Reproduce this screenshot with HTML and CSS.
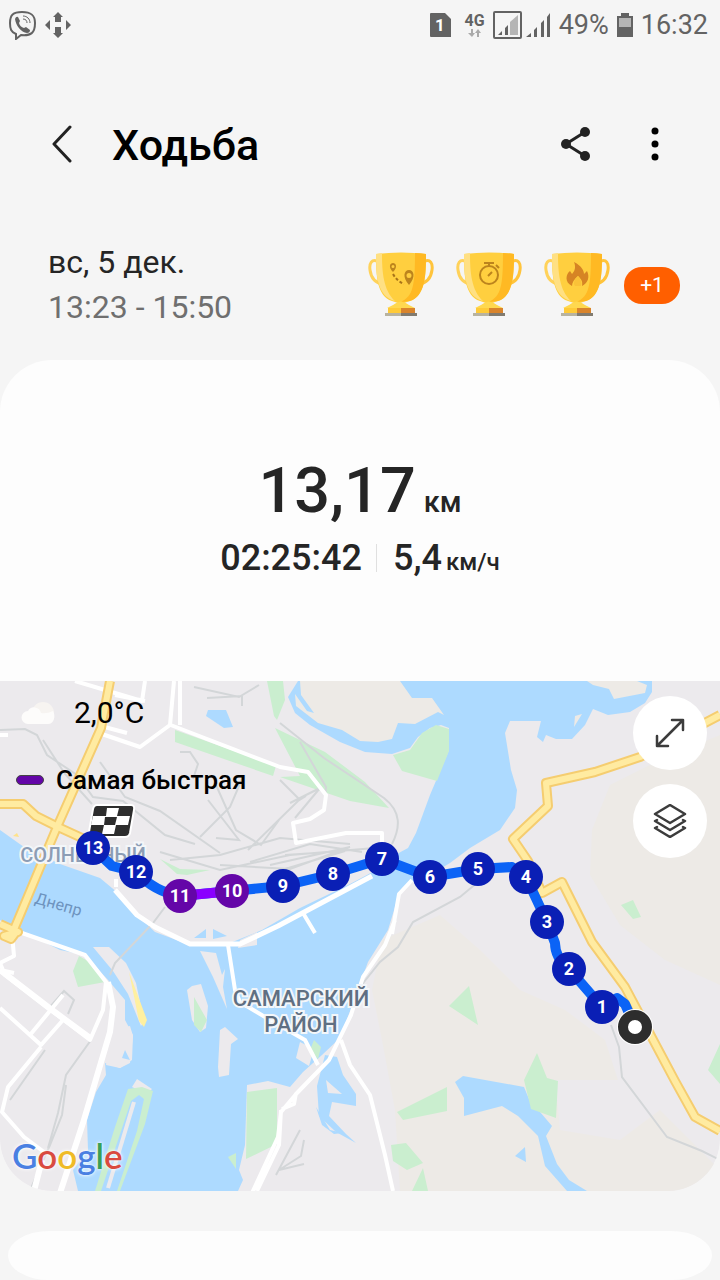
FILE: index.html
```html
<!DOCTYPE html>
<html lang="ru">

<head>
    <meta charset="utf-8">
    <meta name="viewport" content="width=device-width, initial-scale=1">
    <title>Ходьба</title>
    <link rel="stylesheet" href="styles.css">
</head>

<body>
    <div class="status-bar">
        <div class="status-left">
            <svg width="28" height="30" viewBox="0 0 28 30" fill="none" stroke="#636363">
                <path d="M14 2C5 2 2 5 2 13c0 6 1 9 6 11v5l5-4c10 1 14-2 14-12C27 5 23 2 14 2z" stroke-width="2" />
                <path d="M7 9q1-3 3-2l2 4-1 2q1 4 5 5l2-1 4 3q0 3-3 3C13 22 8 16 7 9z" fill="#636363" stroke="none" />
                <path d="M15 6c4 0 7 3 7 7M15 9c3 0 4 2 4 4" />
            </svg>
            <svg width="28" height="28" viewBox="0 0 28 28" fill="#636363">
                <path d="M14 1l5 5h-2v5h-6V6H9zM14 27l-5-5h2v-6h6v6h2zM1 14l5-5v10zM27 14l-5-5v10z" />
            </svg>
        </div>
        <div class="status-right">
            <svg width="21" height="24" viewBox="0 0 21 24">
                <path d="M1 0h14l6 6v18H1q-1 0-1-1V1q0-1 1-1z" fill="#636363" />
                <text x="10" y="18" class="sim-number">1</text>
            </svg>
            <div class="network">
                <span>4G</span>
                <svg width="14" height="8" viewBox="0 0 14 8" fill="#aaa">
                    <path d="M3 0h2v4h2L4 8 0 4h3zM9 8h2V4h2l-3-4-3 4h2z" />
                </svg>
            </div>
            <svg width="29" height="28" viewBox="0 0 29 28">
                <rect x="1" y="1" width="27" height="26" rx="1" fill="none" stroke="#636363" stroke-width="2" />
                <path d="M17 11l8-7v20h-8z" fill="#b5b5b5" />
                <path d="M5 24l4-4v4zM12 17l3-3v10h-3z" fill="#636363" />
            </svg>
            <svg class="signal" width="25" height="25" viewBox="0 0 25 25" fill="#636363">
                <path d="M0 24l5-4v4zM8 17l3-3v10H8zM15 10l3-3v17h-3zM21 4l3-4v24h-3z" />
            </svg>
            <span class="percent">49%</span>
            <svg class="battery" width="16" height="24" viewBox="0 0 16 24">
                <path d="M4 0h8v3h4v21H0V3h4z" fill="#636363" />
                <path d="M2 5h12v9H2z" fill="#b5b5b5" />
            </svg>
            <span>16:32</span>
        </div>
    </div>

    <header class="app-bar">
        <button type="button" class="icon-btn" aria-label="Назад">
            <svg width="22" height="38" viewBox="0 0 22 38" fill="none" stroke="#222" stroke-width="3" stroke-linecap="round" stroke-linejoin="round">
                <path d="M19 2L3 19l16 17" />
            </svg>
        </button>
        <h1>Ходьба</h1>
        <button type="button" class="icon-btn" aria-label="Поделиться">
            <svg width="32" height="34" viewBox="0 0 32 34" fill="#222">
                <path d="M26 5L7 17l19 12" fill="none" stroke="#222" stroke-width="3" />
                <circle cx="26" cy="5" r="5" />
                <circle cx="7" cy="17" r="5" />
                <circle cx="26" cy="29" r="5" />
            </svg>
        </button>
        <button type="button" class="icon-btn" aria-label="Ещё">
            <svg width="10" height="34" viewBox="0 0 10 34" fill="#000">
                <circle cx="5" cy="4" r="3.5" />
                <circle cx="5" cy="17" r="3.5" />
                <circle cx="5" cy="30" r="3.5" />
            </svg>
        </button>
    </header>

    <section class="summary">
        <div class="dates">
            <div>вс, 5 дек.</div>
            <div class="time-range">13:23 - 15:50</div>
        </div>
        <div class="awards">
            <svg width="0" height="0" class="defs">
                <defs>
                    <g id="cup">
                        <path d="M9 9C4 7 1 11 2 18c1 8 6 13 13 14" fill="none" stroke="#ffd25a" stroke-width="3" />
                        <path d="M57 9c5-2 8 2 7 9-1 8-6 13-13 14" fill="none" stroke="#ffc43c" stroke-width="3" />
                        <path d="M8 2q25-3 50 0c0 22-1 42-16 47l-6 2 1 2 9 6v1H20v-1l9-6 1-2-6-2C9 44 8 24 8 2z" fill="#ffcf3f" />
                        <path d="M8 2l6-1c0 18 1 37 13 48C9 44 8 24 8 2z" fill="#ffe083" />
                        <path d="M47 1q6 0 11 1c0 22-1 42-16 47l-9 1c12-6 14-16 14-49z" fill="#ffb923" />
                        <path d="M25 53q8-7 16 0l6 3H19z" fill="#ffd84f" />
                        <path d="M20 56h26v5H20z" fill="#ffca37" />
                        <path d="M33 56h14v5H33z" fill="#d9842c" />
                        <path d="M17 61h32v3H17z" fill="#b8b3a0" />
                        <path d="M33 61h16v3H33z" fill="#817b70" />
                    </g>
                </defs>
            </svg>
            <svg width="66" height="66" viewBox="0 0 66 66">
                <use href="#cup" />
                <path fill-rule="evenodd" fill="#bc841d" d="M25 20c-5-5-3-9 0-9s5 4 0 9zM25 13a1 1 0 0 0 0 3 1 1 0 0 0 0-3zM41 33c-7-8-5-15 0-15s7 7 0 15zM41 21a2 2 0 0 0 0 5 2 2 0 0 0 0-5z" />
                <path d="M25 22q4 7 11 10" fill="none" stroke="#a87419" stroke-width="2" stroke-dasharray="3 2" />
            </svg>
            <svg width="66" height="66" viewBox="0 0 66 66">
                <use href="#cup" />
                <g fill="none" stroke="#bc841d" stroke-width="2">
                    <circle cx="33" cy="23" r="9" />
                    <path d="M28 11h10M33 11v3M32 24l4-4M40 13l3 3" />
                </g>
            </svg>
            <svg width="66" height="66" viewBox="0 0 66 66">
                <use href="#cup" />
                <path fill="#d68424" d="M28 34c-8-4-6-12-2-15l2 3c3-3 4-7 2-12 8 4 10 9 10 12l3-3c3 6 1 12-5 15 1-5-1-7-4-10-4 3-6 7-6 10z" />
                <path fill="#fac238" d="M34 24c-4 3-5 8-3 10h6c1-3 0-7-3-10z" />
            </svg>
            <span class="more">+1</span>
        </div>
    </section>

    <main class="card">
        <div class="stats">
            <div class="distance">13,17<small>км</small></div>
            <div class="details">
                <span class="duration">02:25:42</span>
                <span class="speed">5,4<small>км/ч</small></span>
            </div>
        </div>

        <div class="map">
            <svg class="map-canvas" viewBox="0 681 720 510">
                <rect y="681" width="720" height="510" fill="#eceaed" />

                <!-- open country -->
                <g fill="#edeae6">
                    <path d="M720 735L660 760 610 785 592 830 590 875 620 925 665 960 720 985z" />
                    <path d="M382 940L440 915 480 950 520 990 565 1010 605 1040 618 1080 555 1080 560 1130 620 1140 660 1110 720 1170 720 1191 400 1191 395 1110 382 1040 372 990z" />
                </g>

                <!-- water -->
                <g fill="#addaff">
                    <path d="M0 830L24 847 60 864 100 878 118 893 135 913 155 932 190 945 230 943 262 930 300 908 350 884 380 868 395 855 408 848 416 833 430 795 449 750 449 728 441 725 430 728 418 737 410 748 392 754 365 752 340 742 310 725 295 713 288 697 298 681H652L652 692 645 703 630 712 608 715 593 709 585 725 572 739 556 739 546 735 543 742 537 737 541 721H510L505 733 511 770 517 790 515 808 500 830 470 848 450 863 430 875 408 884 398 897 388 930 368 962 356 995 340 1038 322 1055 303 1072 290 1087 268 1081 247 1085 245 1145 239 1170 243 1180 238 1191H78L73 1170 88 1150 87 1120 96 1092 106 1075 105 1063 120 1068 130 1063 133 1035 125 1020 125 1000 108 980 85 955 60 950 30 935 0 920z" />
                    <path d="M208 710h18l7 17-9 1-18-12zM455 1082l8-6 61 11 5 12 23 27-6 10 11 28 12 16 18 11h-20l-22-25-7-30-20-20-16-10-38 10v-18zM515 1156l10-9 1 15zM325 1055l12 2 6 18 13 19v12l-24-4-3 14 17 18 10 9-20-11-17-16-2-30z" />
                    <path d="M316 1107l14 23 13 3-9 1-12-9z" />
                </g>

                <!-- islands -->
                <g fill="#eceaed">
                    <path d="M93 947l16 0 17 16 10 20 8 38-3 5-13-32-15-23zM187 990l5-4 9-2 7 22-2 22-6 4-8-12zM200 951l16 2 6 22 3-6-2 18 4 22-14-32zM220 1030l5-3 13 12-7 5-2 31-10 2-1-10zM300 1042l14 7-5 17-13-8zM326 1080l16 14-14-1zM137 1079l15 10-5 5-15-7zM240 940l17-8v13l-19 3zM112 1030l18-4 3 10-1 24-12 8-14-3z" />
                </g>
                <g fill="#edeae6">
                    <path d="M300 681h100l12 17h20l12 17-6-3-23 12-17-1-6 16-14 3-18-1-18-11-24-7-22-17-1-12 12 17 7 2-13-18z" />
                    <path d="M587 681h50l10 4-2 8-31 6-5-10-16-4zM575 716l7-2-8 13z" />
                </g>
                <path d="M194 938l12-9v9zM213 929l14 7-14 3zM125 1050l5 10-8-2z" fill="#addaff" />

                <!-- parks -->
                <g fill="#caeecf">
                    <path d="M175 730l101 36-3 10-98-34zM267 681h16l2 19-8 20-3-4zM275 728l50 24 40 30 24 26-39-7-70-24 20-1zM393 755l17-5 12-17 14-8 13 4v22l-12 30-35-10zM621 905l12-5 8 17-8 2zM160 859l20 10 30 1-23 5-10-1zM73 971l6-15 14 8 12 18-27 5zM194 997l13 23-6 12-7-7zM247 1092l30-4v56l-31 15zM228 1157l8-4v16zM449 1006l20-20 9 39zM397 1112l50-25v24l-44 9zM524 1080l13-27 10 25 11 3-2 37-25-9zM391 1145l15-2 17 20-16 7-14-9zM412 1191l11-23 5 23zM708 1070l12-26v40zM314 1040l7 7-3 12-8-9z" />
                    <path d="M95 1191l20-64 13-38 14-2 11 4-8 33-25 67zM101 1191h16l20-60 7-32-5-4-8 6z" fill-rule="evenodd" />
                </g>
                <path d="M108 1188l26-86" stroke="#eceaed" stroke-width="4" fill="none" />
                <path d="M129 972l18 48-3 7-5-6z" fill="#fff0a0" />
                <path d="M13 836l6 1-2-4z" fill="#ffe289" />

                <!-- railways and tracks -->
                <g class="tracks">
                    <path d="M0 730l25-1 12 6 10 20 30 20 16 22 30 4 42 34 30 9M43 740l22 34 27 30M100 762l25 35 35 14 60 42M180 752h10l8 12-5 15M194 687l45 10 20-12M207 698l35-2v10M200 837l30-30 12-28M216 785l20 45 25 15 18-25M208 800l31 40-23-2M248 850l50-49 8-5M280 780l20 20M290 803l30-15-25 30M170 860l50-5 60-17 70 6M160 852l60 18 70-15 85-7M270 865l80-18-60 22-70-4M285 855l60-4-60 18M250 862l60-18 52 8" />
                    <path d="M280 723l44 35 60 40c18 14 16 30 8 46M300 742l26 45-2 23M165 907l-12 16-38 40-5 12M50 1007l14-16 10 9-6 14M45 1050l-35 50M91 1040l-25 35-8 38-10 35M66 1085l-4 30-12 30-22 50M478 882l-18 15-47 25-15 25-18 15-20 25M611 1025l8 22 3 30 45 60 35 14 20 10M300 1130l-24 45M304 1140l-3 16-22 14 25-6" />
                </g>

                <!-- white streets -->
                <g class="streets">
                    <path d="M75 681l67 20 3-20M115 695l30 6M96 732l44 15 30-22 4-44M180 681v44M97 725l30 8M168 724l112 43 28 5 18 23-2 15-14 9-17 4 3 20 50-10h36v15M0 735h8M116 879v8" />
                    <path d="M115 890l22 25 18 12 35 17h50l38-18 94-50" stroke-width="5" />
                    <path d="M22 933l63 22 21 27-3 28-13 30-85-65-5-12 14-7-2-22M0 1008l41 37 22-25M30 1035l33-40M0 970l14 3M41 1047l-33 40-6 25 22 25 20 15" />
                    <path d="M0 970l48 37 42 31" stroke-width="6" />
                    <path d="M108 982l5 25-3 25-27 91-23 70M42 1160l-8 31" stroke-width="6" />
                    <path d="M228 945l7 45 5 12 30 18 35 20 13 25M395 920l-10 25-22 32-12 38-22 45-32 33-16 19-3 25-26 56M281 1110l-2 35-22 46M412 880l-13 14-7 40M341 1040l9 25 20 30 15 60 8 36M296 1093l-2 11-12 5M303 913l12 20" />
                </g>

                <!-- main roads -->
                <g class="road-edge">
                    <path id="road-a" d="M110 681l-9 47-44 99-42 100-3 9M0 804h23l13 12 22 11 24 11M0 924l18 8-14 4 7 3 6-8" />
                    <path id="road-b" d="M720 715l-80 42-45 15-49 11 2 23-35 33 15 22 14 32 20-11 30 60 33 45 50 94 20 36 25 14" />
                </g>
                <g class="road">
                    <use href="#road-a" />
                    <use href="#road-b" />
                </g>

                <!-- place names -->
                <text x="83" y="862" class="place place-dim">СОЛНЕЧНЫЙ</text>
                <text x="301" y="1006" class="place">САМАРСКИЙ</text>
                <text x="301" y="1032" class="place">РАЙОН</text>
                <text x="34" y="903" class="river" transform="rotate(16 34 903)">Днепр</text>

                <!-- finish flag -->
                <g>
                    <path d="M97 805h34q4 0 3 5l-4 23q-1 4-5 4H92q-4 0-3-5l4-23q1-4 4-4z" fill="#2d2d2d" stroke="#fff" stroke-width="2" />
                    <path d="M107 808h12l-2 8h13l-2 9h-12l-2 9h-12l2-9H91l2-9h13zM105 817l-1 8h11l2-8z" fill="#fff" fill-rule="evenodd" />
                </g>

                <!-- walked route -->
                <path class="route" d="M635 1027L625 1004 617 998 602 1007 569 969Q555 958 555 943L547 922 526 877 512 867 478 869 430 877 382 859 333 874 283 886 232 891 180 896Q155 892 136 872L112 866 93 848" />
                <path class="route fastest" d="M180 896L232 891" />
                <g class="km">
                    <circle cx="602" cy="1007" r="17" /><text x="602" y="1013">1</text>
                    <circle cx="569" cy="969" r="17" /><text x="569" y="975">2</text>
                    <circle cx="547" cy="922" r="17" /><text x="547" y="928">3</text>
                    <circle cx="526" cy="877" r="17" /><text x="526" y="883">4</text>
                    <circle cx="478" cy="869" r="17" /><text x="478" y="875">5</text>
                    <circle cx="430" cy="877" r="17" /><text x="430" y="883">6</text>
                    <circle cx="382" cy="859" r="17" /><text x="382" y="865">7</text>
                    <circle cx="333" cy="874" r="17" /><text x="333" y="880">8</text>
                    <circle cx="283" cy="886" r="17" /><text x="283" y="892">9</text>
                    <circle cx="232" cy="891" r="17" class="fast" /><text x="232" y="897">10</text>
                    <circle cx="180" cy="896" r="17" class="fast" /><text x="180" y="902">11</text>
                    <circle cx="136" cy="872" r="17" /><text x="136" y="878">12</text>
                    <circle cx="93" cy="848" r="17" /><text x="93" y="854">13</text>
                </g>
                <circle cx="635" cy="1027" r="12" fill="#fff" stroke="#fff" stroke-width="12" />
                <circle cx="635" cy="1027" r="12" fill="#fff" stroke="#2d2d2d" stroke-width="10" />
            </svg>

            <div class="map-info">
                <div class="weather">
                    <svg width="36" height="24" viewBox="0 0 36 24">
                        <circle cx="22" cy="12" r="11" fill="#f7f4f1" />
                        <path d="M7 23a6 6 0 0 1 0-13 7 7 0 0 1 13 2q6 1 12-2c3 5 1 13-5 13z" fill="#fdfcfb" />
                    </svg>
                    <span>2,0°C</span>
                </div>
                <div class="legend"><i class="legend-line"></i>Самая быстрая</div>
            </div>

            <div class="map-buttons">
                <button type="button" class="round-btn" aria-label="Развернуть карту">
                    <svg width="34" height="34" viewBox="0 0 34 34" fill="none" stroke="#3c3c3c" stroke-width="2.5" stroke-linecap="round" stroke-linejoin="round">
                        <path d="M4 30L30 4M19 4h11v10M4 20v10h11" />
                    </svg>
                </button>
                <button type="button" class="round-btn" aria-label="Слои">
                    <svg width="34" height="34" viewBox="0 0 34 34" fill="none" stroke="#3c3c3c" stroke-width="2.5" stroke-linecap="round" stroke-linejoin="round">
                        <path d="M17 1l15 9-15 9-15-9zM4 16l-2 1 15 9 15-9-2-1M4 23l-2 1 15 9 15-9-2-1" />
                    </svg>
                </button>
            </div>

            <div class="google"><span class="g-blue">G</span><span class="g-red">o</span><span class="g-yellow">o</span><span class="g-blue">g</span><span class="g-green">l</span><span class="g-red">e</span></div>
        </div>
    </main>

    <section class="next-card"></section>
</body>

</html>
```
FILE: styles.css
```css
* {
    box-sizing: border-box;
}

body {
    margin: 0;
    background: #f5f5f5;
    color: #252525;
    font-family: Roboto, "Liberation Sans", sans-serif;
}

button {
    border: none;
    padding: 0;
    cursor: pointer;
}

svg {
    display: block;
}

/* Status bar */
.status-bar {
    display: flex;
    justify-content: space-between;
    align-items: center;
    height: 50px;
    padding: 0 12px 0 8px;
    color: #636363;
    font-size: 27px;
}

.status-left,
.status-right {
    display: flex;
    align-items: center;
    gap: 8px;
}

.sim-number {
    font-size: 17px;
    font-weight: 700;
    fill: #fff;
    text-anchor: middle;
}

.network {
    display: flex;
    flex-direction: column;
    align-items: center;
    margin-left: 6px;
    font-size: 16px;
    font-weight: 700;
    line-height: 16px;
}

.signal {
    margin-left: -4px;
}

/* Title row */
.app-bar {
    display: flex;
    align-items: center;
    height: 96px;
    margin-top: 46px;
    padding: 0 43px 0 40px;
}

.app-bar h1 {
    flex: 1;
    margin: 2px 0 0 28px;
    color: #000;
    font-size: 43px;
    font-weight: 500;
}

.icon-btn {
    display: flex;
    justify-content: center;
    align-items: center;
    width: 44px;
    height: 48px;
    background: none;
}

.icon-btn + .icon-btn {
    margin-left: 36px;
}

/* Date and trophies */
.summary {
    display: flex;
    justify-content: space-between;
    align-items: center;
    height: 168px;
    padding: 18px 40px 0 48px;
    font-size: 32px;
    line-height: 45px;
}

.time-range {
    color: #6f6f6f;
}

.awards {
    display: flex;
    align-items: center;
    gap: 22px;
}

.defs {
    position: absolute;
}

.more {
    width: 56px;
    margin-left: -8px;
    border-radius: 18px;
    background: #ff5f00;
    color: #fff;
    font-size: 21px;
    line-height: 37px;
    text-align: center;
}

/* Workout card */
.card {
    overflow: hidden;
    border-radius: 52px;
    background: #fdfdfd;
}

.stats {
    display: flex;
    flex-direction: column;
    align-items: center;
    padding: 92px 0 100px;
    font-weight: 500;
}

.stats small {
    line-height: 1;
}

.distance {
    display: flex;
    align-items: baseline;
    gap: 8px;
    font-size: 63px;
    line-height: 77px;
}

.distance small {
    font-size: 29px;
}

.details {
    display: flex;
    align-items: center;
    margin-top: 6px;
    font-size: 36px;
    line-height: 46px;
}

.duration {
    line-height: 28px;
    padding-right: 14px;
    border-right: 1px solid #e0e0e0;
}

.speed {
    display: flex;
    align-items: baseline;
    gap: 4px;
    padding-left: 16px;
}

.speed small {
    font-size: 24px;
}

/* Map */
.map {
    position: relative;
}

.map-canvas {
    width: 100%;
    height: auto;
}

.tracks {
    fill: none;
    stroke: #d3d6d8;
    stroke-width: 2;
}

.streets {
    fill: none;
    stroke: #fff;
    stroke-width: 4;
    stroke-linejoin: round;
}

.road-edge {
    fill: none;
    stroke: #f5cd70;
    stroke-width: 10;
    stroke-linejoin: round;
}

.road {
    fill: none;
    stroke: #ffeba1;
    stroke-width: 6;
    stroke-linejoin: round;
}

.place {
    fill: #5f6f82;
    stroke: #f3f6f9;
    stroke-width: 4;
    paint-order: stroke;
    font-size: 22px;
    font-weight: 500;
    text-anchor: middle;
}

.place-dim {
    fill: #8c9db5;
    font-size: 20px;
}

.river {
    fill: #6d93be;
    font-size: 16px;
}

.route {
    fill: none;
    stroke: #0b63f6;
    stroke-width: 10;
    stroke-linejoin: round;
}

.fastest {
    stroke: #8a00ff;
}

.km circle {
    fill: #0a1fb5;
}

.km .fast {
    fill: #6406a8;
}

.km text {
    fill: #fff;
    font-size: 18px;
    font-weight: 700;
    text-anchor: middle;
}

.map-info {
    position: absolute;
    top: 14px;
    left: 16px;
    color: #000;
}

.weather {
    display: flex;
    align-items: center;
    gap: 17px;
    padding-left: 5px;
    font-size: 30px;
    line-height: 36px;
}

.legend {
    display: flex;
    align-items: center;
    gap: 12px;
    margin-top: 32px;
    font-size: 26px;
    font-weight: 500;
    line-height: 34px;
}

.legend-line {
    width: 28px;
    height: 10px;
    border: 1px solid #444;
    border-radius: 5px;
    background: #6406a8;
}

.map-buttons {
    position: absolute;
    top: 15px;
    right: 13px;
    display: flex;
    flex-direction: column;
    gap: 14px;
}

.round-btn {
    display: flex;
    justify-content: center;
    align-items: center;
    width: 74px;
    height: 74px;
    border-radius: 50%;
    background: #fff;
}

.google {
    position: absolute;
    bottom: 14px;
    left: 12px;
    font-family: Lato, sans-serif;
    font-size: 35px;
    font-weight: 600;
    line-height: 44px;
    text-shadow: 0 0 2px #fff, 0 0 4px #fff;
}

.g-blue {
    color: #4a80e2;
}

.g-red {
    color: #d94b40;
}

.g-yellow {
    color: #efbb27;
}

.g-green {
    color: #38a055;
}

/* Next card */
.next-card {
    height: 49px;
    margin: 40px 8px 0;
    border-radius: 42px / 25px;
    background: #fdfdfd;
}
```
